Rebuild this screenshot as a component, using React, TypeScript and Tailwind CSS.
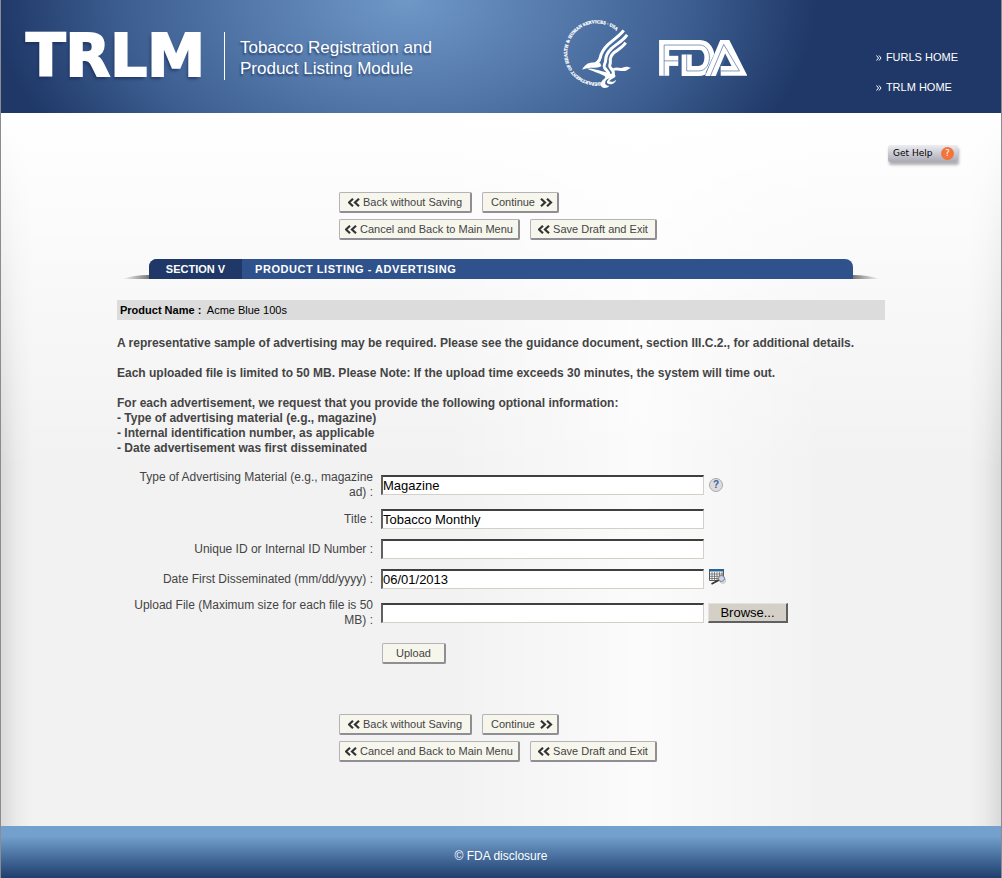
import { useState } from "react";
import type { ReactNode } from "react";

function Chevrons({ forward = false }: { forward?: boolean }) {
  return (
    <svg
      viewBox="0 0 13 9"
      className="h-[9px] w-[13px] shrink-0"
      fill="none"
      stroke="#333333"
      strokeWidth="2.2"
      aria-hidden="true"
    >
      {forward ? (
        <path d="M1 0.8 5 4.5 1 8.2M7 0.8 11 4.5 7 8.2" />
      ) : (
        <path d="M5 0.8 1 4.5 5 8.2M11 0.8 7 4.5 11 8.2" />
      )}
    </svg>
  );
}

function ActionButton({ children, className = "" }: { children: ReactNode; className?: string }) {
  return (
    <button
      type="button"
      className={
        "flex h-[21px] items-center justify-center gap-0.5 whitespace-nowrap rounded-[2px] border border-b-2 border-r-2 border-[#b4b4b8] border-b-[#8e8e94] border-r-[#8e8e94] bg-[#f6f6ec] text-[11px] leading-none text-[#444444] " +
        className
      }
    >
      {children}
    </button>
  );
}

function ActionButtons() {
  return (
    <div className="mx-auto flex w-[324px] flex-col gap-1.5">
      <div className="flex gap-2.5">
        <ActionButton className="w-[133px]">
          <Chevrons />
          Back without Saving
        </ActionButton>
        <ActionButton className="w-[77px] pl-1">
          Continue&nbsp;
          <Chevrons forward />
        </ActionButton>
      </div>
      <div className="flex gap-2.5">
        <ActionButton className="w-[181px]">
          <Chevrons />
          Cancel and Back to Main Menu
        </ActionButton>
        <ActionButton className="w-[127px]">
          <Chevrons />
          Save Draft and Exit
        </ActionButton>
      </div>
    </div>
  );
}

function HhsLogo() {
  return (
    <svg viewBox="0 0 240 240" className="size-20" role="img" aria-label="Department of Health and Human Services">
      <defs>
        <path id="seal-ring" d="M134 211A89 89 0 1 1 194 70" />
      </defs>
      <text
        fill="#ffffff"
        stroke="#ffffff"
        strokeWidth="0.7"
        fontSize="13.5"
        fontWeight="700"
        fontFamily="Liberation Serif, serif"
      >
        <textPath href="#seal-ring">DEPARTMENT OF HEALTH &amp; HUMAN SERVICES · USA</textPath>
      </text>
      <g fill="none" stroke="#ffffff" strokeLinejoin="round">
        <path strokeWidth="9" d="M203 55C194 68 172 84 156 98C142 112 136 122 133 136C130 149 124 154 112 158" />
        <path strokeWidth="9" d="M213 68C204 84 180 97 166 110C152 124 149 132 149 144C149 158 140 158 146 168C152 176 158 178 160 190" />
        <path strokeWidth="9" d="M209 92C200 106 184 114 174 122C163 132 162 140 163 149C164 160 157 160 163 167C169 173 174 176 172 188" />
      </g>
      <g fill="#ffffff">
        <path d="M78 173C84 162 91 154 104 152C118 150 125 154 132 152L136 162C127 168 114 167 104 167C94 167 86 170 78 173Z" />
        <path d="M94 170C108 169 124 174 138 178C156 182 166 186 166 194C165 200 154 198 149 206C145 214 149 222 160 221C154 230 136 231 134 218C133 207 148 200 148 195C145 187 114 180 94 170Z" />
        <path d="M162 186C172 183 180 187 178 194C175 199 163 201 160 208C169 212 176 207 180 203C179 214 164 221 154 214C149 207 162 198 164 194Z" />
        <path d="M171 169C184 162 193 172 203 166C211 162 218 165 225 168C218 170 216 174 210 176C197 180 184 173 173 176Z" />
      </g>
    </svg>
  );
}

function FdaLogo() {
  return (
    <svg viewBox="357 119 261 107" className="h-9 w-[88px]" role="img" aria-label="FDA" fill="none">
      <g stroke="#ffffff" strokeWidth="30">
        <path d="M372 225V134H478C517 134 517 211 474 211H439V162" />
        <path d="M372 181H414" />
      </g>
      <g stroke="#6c87b0" strokeWidth="2.5">
        <path d="M372 225V134H478C517 134 517 211 474 211H439V162" />
        <path d="M372 181H414" />
      </g>
      <path stroke="#3b5d8e" strokeWidth="38" d="M512 226 553 136" />
      <g strokeLinejoin="miter">
        <path stroke="#ffffff" strokeWidth="29" d="M507 232 549 132H556L596 211H540" />
        <path stroke="#6c87b0" strokeWidth="2.5" d="M507 232 549 132 596 211H540" />
      </g>
    </svg>
  );
}

function NavLink({ href, children }: { href: string; children: ReactNode }) {
  return (
    <a href={href} className="flex items-center gap-1 whitespace-nowrap">
      <svg viewBox="0 0 6 6" className="mt-px size-1.5" fill="none" stroke="#ffffff" aria-hidden="true">
        <path d="M.5.5 2.500 3 .5 5.500M3 .5 5 3 3 5.500" />
      </svg>
      {children}
    </a>
  );
}

function Header() {
  return (
    <header className="flex min-h-[113px] items-start bg-[#1f3868] bg-[radial-gradient(ellipse_410px_259px_at_405px_0px,#6f98c7_0%,#4f73a5_45%,#3c5d90_70%,#1f3868_100%)] text-white">
      <div className="flex items-center pl-[25px] pt-8">
        <div className="w-[198px] font-['DejaVu_Sans',sans-serif] text-[58px] font-bold leading-[48px] [-webkit-text-stroke:2px_#ffffff] [text-shadow:-2px_3px_3px_rgba(20,40,80,0.6)]">
          TRLM
        </div>
        <p className="h-12 w-[338px] border-l border-white pl-[15px] pt-[5px] text-[17px] leading-[21px] [text-shadow:-1px_2px_2px_rgba(20,40,80,0.6)]">
          Tobacco Registration and
          <br />
          Product Listing Module
        </p>
      </div>
      <div className="flex items-start">
        <div className="-ml-1.5 pt-3">
          <HhsLogo />
        </div>
        <div className="pl-[23px] pt-10">
          <FdaLogo />
        </div>
      </div>
      <nav className="ml-auto flex flex-col gap-[15px] pr-[43px] pt-[50px] text-[11px] leading-[15px]">
        <NavLink href="#furls">FURLS HOME</NavLink>
        <NavLink href="#trlm">TRLM HOME</NavLink>
      </nav>
    </header>
  );
}

function SectionBar() {
  return (
    <div className="mx-[5px] mt-[19px] flex h-5 items-stretch">
      <svg viewBox="0 0 27 20" className="w-[27px]" aria-hidden="true">
        <defs>
          <linearGradient id="shade-left">
            <stop offset="0" stopColor="#555555" stopOpacity="0" />
            <stop offset="1" stopColor="#555555" stopOpacity="0.8" />
          </linearGradient>
        </defs>
        <path d="M0 20Q12 16 27 16V20Z" fill="url(#shade-left)" />
      </svg>
      <div className="flex flex-1 overflow-hidden rounded-t-[8px] bg-[#2f528c] text-[11px] font-bold leading-5 text-white">
        <div className="w-[93px] bg-[#1f3868] text-center">SECTION V</div>
        <h1 className="pl-[13px] tracking-wider">PRODUCT LISTING - ADVERTISING</h1>
      </div>
      <svg viewBox="0 0 27 20" className="w-[27px]" aria-hidden="true">
        <defs>
          <linearGradient id="shade-right">
            <stop offset="0" stopColor="#555555" stopOpacity="0.8" />
            <stop offset="1" stopColor="#555555" stopOpacity="0" />
          </linearGradient>
        </defs>
        <path d="M27 20Q15 16 0 16V20Z" fill="url(#shade-right)" />
      </svg>
    </div>
  );
}

function HelpIcon() {
  return (
    <button
      type="button"
      aria-label="Help"
      className="flex size-[14px] items-center justify-center rounded-full border border-[#aaaaaa] bg-[#dcdcdf] text-[10px] font-bold leading-none text-[#45619c]"
    >
      ?
    </button>
  );
}

function CalendarIcon() {
  return (
    <button type="button" aria-label="Choose date">
      <svg viewBox="0 0 17 16" className="h-4 w-[17px]" fill="none">
        <path d="M.5 1h14v10.500H.5z" fill="#ffffff" stroke="#555555" />
        <path d="M0 0h15v2.500H0z" fill="#2a6496" />
        <path d="M3 3v9M5.500 3v9M8 3v9M10.500 3v9M13 3v9M1 5h14M1 7.300h14M1 9.500h14" stroke="#666666" strokeWidth=".8" />
        <path d="M10 11 2.500 15" stroke="#333333" strokeWidth="1.700" />
        <circle cx="13.800" cy="11.500" r="2.800" fill="#eeeeee" stroke="#bbbbbb" />
        <circle cx="12.500" cy="9.500" r="3" fill="#cbd4f0" stroke="#777777" />
      </svg>
    </button>
  );
}

type FieldProps = {
  id: string;
  label: string;
  initial?: string;
  spaced?: boolean;
  children?: ReactNode;
};

function Field({ id, label, initial = "", spaced = false, children }: FieldProps) {
  const [value, setValue] = useState(initial);
  return (
    <div className={"flex min-h-[30px] items-center " + (spaced ? "mb-1" : "")}>
      <div className="w-[256px] shrink-0 text-right">
        <label htmlFor={id} className="inline-block max-w-[248px]">
          {label}
        </label>
      </div>
      <input
        id={id}
        type="text"
        value={value}
        onChange={(event) => setValue(event.target.value)}
        className="ml-2 mr-1 h-5 w-[323px] border border-l-2 border-t-2 border-[#d4d0c8] border-l-[#606060] border-t-[#404040] bg-white text-[13px] leading-4 text-black outline-none"
      />
      {children}
    </div>
  );
}

export default function App() {
  return (
    <div className="flex min-h-screen flex-col border-x border-[#8a8c94] font-['Liberation_Sans',Arial,sans-serif] text-xs leading-[15px] text-[#444444]">
      <Header />
      <main className="flex-1 bg-[#f2f2f2] bg-[linear-gradient(to_bottom,#ffffff_0%,rgba(255,255,255,0.6)_20%,rgba(255,255,255,0)_50%),linear-gradient(to_right,rgba(0,0,0,0.1)_0px,rgba(0,0,0,0.03)_16px,rgba(0,0,0,0)_32px),linear-gradient(to_left,rgba(0,0,0,0.1)_0px,rgba(0,0,0,0.03)_16px,rgba(0,0,0,0)_32px),linear-gradient(to_right,rgba(255,255,255,0)_45%,rgba(255,255,255,0.7)_64%,rgba(255,255,255,0)_82%)] pb-16">
        <div className="flex justify-end pr-[43px] pt-8">
          <button
            type="button"
            className="flex h-[17px] w-[70px] items-center justify-between rounded-[2px] bg-linear-to-b from-[#ededf2] to-[#aaaab6] pl-[5px] pr-1 font-['DejaVu_Sans',sans-serif] text-[9px] text-black shadow-[1px_3px_3px_rgba(0,0,0,0.3)]"
          >
            Get Help
            <span className="flex size-[13px] items-center justify-center rounded-full bg-[#f4733a] text-[9px] leading-none text-white">
              ?
            </span>
          </button>
        </div>
        <div className="mx-auto max-w-[768px] pt-[30px]">
          <ActionButtons />
          <SectionBar />
          <p className="mt-[21px] bg-[#dcdcdc] px-[3px] text-[11px] leading-5 text-black">
            <b>Product Name :</b>&nbsp; Acme Blue 100s
          </p>
          <div className="mt-4 flex flex-col gap-[15px] font-bold">
            <p>
              A representative sample of advertising may be required. Please see the guidance document, section
              III.C.2., for additional details.
            </p>
            <p>
              Each uploaded file is limited to 50 MB. Please Note: If the upload time exceeds 30 minutes, the system
              will time out.
            </p>
            <div>
              <p>For each advertisement, we request that you provide the following optional information:</p>
              <ul>
                <li>- Type of advertising material (e.g., magazine)</li>
                <li>- Internal identification number, as applicable</li>
                <li>- Date advertisement was first disseminated</li>
              </ul>
            </div>
          </div>
          <form className="mt-[14px]">
            <Field id="material" label="Type of Advertising Material (e.g., magazine ad) :" initial="Magazine" spaced>
              <span className="pl-[1px]">
                <HelpIcon />
              </span>
            </Field>
            <Field id="title" label="Title :" initial="Tobacco Monthly" />
            <Field id="unique-id" label="Unique ID or Internal ID Number :" />
            <Field id="date" label="Date First Disseminated (mm/dd/yyyy) :" initial="06/01/2013" spaced>
              <span className="pl-[1px]">
                <CalendarIcon />
              </span>
            </Field>
            <Field id="file" label="Upload File (Maximum size for each file is 50 MB) :">
              <button
                type="button"
                className="h-5 w-20 border border-b-2 border-r-2 border-[#e4e2dc] border-b-[#606060] border-r-[#606060] bg-[#d4d0c8] text-[13px] leading-none text-black"
              >
                Browse...
              </button>
            </Field>
            <div className="pl-[265px] pt-[15px]">
              <ActionButton className="w-16">Upload</ActionButton>
            </div>
          </form>
          <div className="mt-[50px]">
            <ActionButtons />
          </div>
        </div>
      </main>
      <footer className="flex h-[52px] items-center justify-center bg-linear-to-b from-[#73a0cd] from-20% to-[#1f3f6e] pt-2 text-white">
        © FDA disclosure
      </footer>
    </div>
  );
}
